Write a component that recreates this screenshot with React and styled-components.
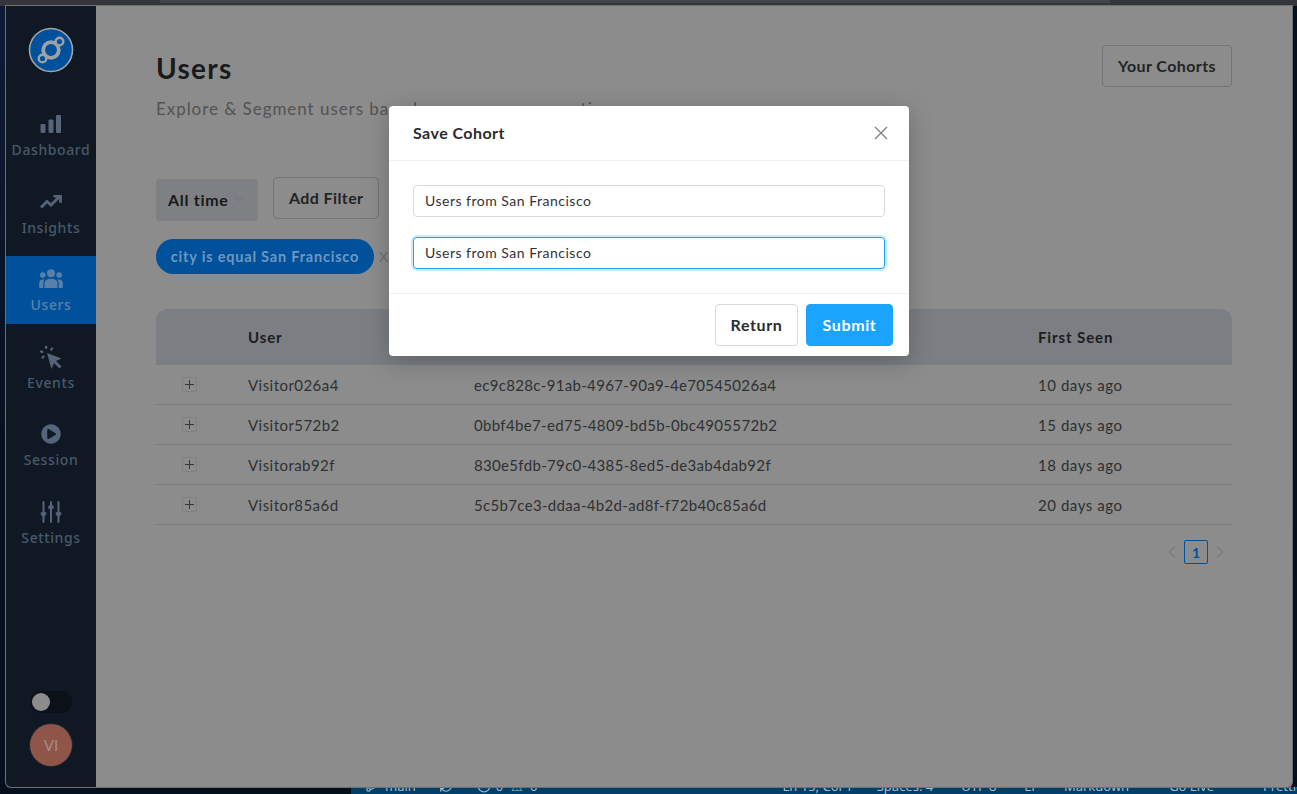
import React from 'react';
import styled, { createGlobalStyle } from 'styled-components';
import { FaPlayCircle } from 'react-icons/fa';
import { GitBranch, RefreshCw, XCircle, ChevronDown } from 'lucide-react';

const GlobalStyle = createGlobalStyle`
    html, body {
        margin: 0;
        height: 100%;
        background: #060f1e;
        font-family: "Lato", "Open Sans", sans-serif;
    }
    * {
        box-sizing: border-box;
    }
`;

const Desktop = styled.div`
    width: 1297px;
    height: 794px;
    display: flex;
    flex-direction: column;
    overflow: hidden;
    background: linear-gradient(160deg, #101a35, #060f1e 40%, #04101c);
`;

const TopStrip = styled.div`
    height: 6px;
    flex: none;
    background: #35363b;
`;

const TopTab = styled.div`
    width: 950px;
    height: 3px;
    margin-left: 160px;
    background: #45464b;
`;

const Middle = styled.div`
    flex: 1;
    min-height: 0;
    display: flex;
    padding: 0 5px 0 6px;
`;

const Window = styled.div`
    flex: 1;
    display: flex;
    position: relative;
    background: #8c8c8c;
    border-bottom-left-radius: 5px;
    border-bottom-right-radius: 5px;
    box-shadow: 0 0 0 1px #6f7074;
    overflow: hidden;
`;

const Sidebar = styled.nav`
    width: 90px;
    flex: none;
    display: flex;
    flex-direction: column;
    align-items: stretch;
    background: #0f1823;
`;

const Logo = styled.div`
    height: 88px;
    padding-top: 21px;
    display: flex;
    justify-content: center;
`;

const NavList = styled.div`
    margin-top: 2px;
    display: flex;
    flex-direction: column;
`;

const NavItem = styled.div`
    height: 77.5px;
    padding-top: ${p => (p.$active ? '11px' : '16px')};
    display: flex;
    flex-direction: column;
    align-items: center;
    gap: 4px;
    color: ${p => (p.$active ? '#5b80a8' : '#4b586a')};
    background: ${p => (p.$active ? '#00519b' : 'transparent')};
    ${p => p.$active && 'height: 68px; margin: 5px 0 4.5px;'}
`;

const NavIcon = styled.div`
    height: 24px;
    display: flex;
    align-items: center;
    justify-content: center;
`;

const NavLabel = styled.span`
    font-family: "Noto Sans", sans-serif;
    font-size: 14px;
    font-weight: 500;
    line-height: 20px;
    letter-spacing: 0.6px;
`;

const SideBottom = styled.div`
    margin-top: auto;
    padding: 0 0 21px 24px;
    display: flex;
    flex-direction: column;
    gap: 11px;
`;

const Toggle = styled.div`
    width: 42px;
    height: 22px;
    padding: 2px;
    border-radius: 11px;
    background: #0a1118;
`;

const Knob = styled.div`
    width: 18px;
    height: 18px;
    border-radius: 50%;
    background: #8c8c8c;
`;

const Avatar = styled.div`
    width: 42px;
    height: 42px;
    border-radius: 50%;
    display: flex;
    align-items: center;
    justify-content: center;
    background: #8f5548;
    box-shadow: 0 0 0 1px #1c2638;
    color: #a88c86;
    font-size: 15px;
`;

const Main = styled.main`
    flex: 1;
    padding: 39px 60px 0;
    display: flex;
    flex-direction: column;
`;

const HeadRow = styled.div`
    display: flex;
    justify-content: space-between;
    align-items: flex-start;
`;

const Title = styled.h1`
    margin: 0;
    font-size: 28px;
    line-height: 46px;
    font-weight: 700;
    color: #181a1c;
    letter-spacing: 1.3px;
`;

const Subtitle = styled.p`
    margin: 6px 0 0;
    font-size: 17px;
    line-height: 24px;
    color: #525354;
    letter-spacing: 0.95px;
`;

const OutlineButton = styled.button`
    height: 42px;
    padding: 0 15px 2px;
    border: 1px solid #747474;
    border-radius: 4px;
    background: transparent;
    font: 700 16px "Lato", sans-serif;
    letter-spacing: 0.4px;
    color: #232425;
`;

const CohortsButton = styled(OutlineButton)`
    width: 130px;
    padding: 0 0 2px;
`;

const FilterRow = styled.div`
    margin-top: 56px;
    display: flex;
    align-items: flex-start;
    gap: 15px;
`;

const SelectBox = styled.div`
    width: 102px;
    height: 42px;
    margin-top: 2px;
    padding: 0 12px 2px;
    display: flex;
    align-items: center;
    justify-content: space-between;
    border-radius: 4px;
    background: #7e8083;
    font-size: 16px;
    font-weight: 700;
    letter-spacing: 0.7px;
    color: #16181a;
`;

const PillRow = styled.div`
    margin-top: 18px;
    display: flex;
    align-items: center;
    gap: 5px;
`;

const Pill = styled.div`
    width: 218px;
    height: 35px;
    display: flex;
    align-items: center;
    justify-content: center;
    border-radius: 18px;
    background: #00519b;
    color: #6f97bf;
    font-size: 14.5px;
    font-weight: 700;
    letter-spacing: 0.8px;
`;

const PillClose = styled.span`
    color: #6d6d6d;
    font-size: 14px;
`;

const Table = styled.div`
    margin-top: 35px;
`;

const Row = styled.div`
    display: grid;
    grid-template-columns: 92px 226px 564px 1fr;
    align-items: center;
    height: 40px;
    border-bottom: 1px solid #7c7c7c;
    font-size: 15px;
    color: #2f3032;
    letter-spacing: 0.45px;
`;

const HeaderRow = styled(Row)`
    height: 56px;
    border: 0;
    border-radius: 12px 12px 0 0;
    background: #7b7e82;
    font-weight: 700;
    letter-spacing: 0.9px;
    color: #1b1d1f;
`;

const IdCell = styled.span`
    letter-spacing: 0.33px;
`;

const SeenCell = styled.span`
    letter-spacing: 0.55px;
`;

const Expand = styled.div`
    width: 15px;
    height: 15px;
    margin-left: 26px;
    display: flex;
    align-items: center;
    justify-content: center;
    border: 1px solid #808080;
    border-radius: 2px;
`;

const Pagination = styled.div`
    margin-top: 15px;
    display: flex;
    justify-content: flex-end;
    align-items: center;
    gap: 7px;
    padding-right: 7px;
`;

const PageBox = styled.div`
    width: 24px;
    height: 24px;
    display: flex;
    align-items: center;
    justify-content: center;
    border: 1px solid #00519b;
    border-radius: 2px;
    color: #00519b;
    font-size: 14px;
    font-weight: 700;
`;

const Modal = styled.div`
    position: absolute;
    left: 383px;
    top: 100px;
    width: 520px;
    height: 250px;
    display: flex;
    flex-direction: column;
    border-radius: 4px;
    background: #fff;
    box-shadow: 0 6px 24px rgba(0, 0, 0, 0.22);
`;

const ModalHead = styled.div`
    height: 55px;
    padding: 0 21px 2px 24px;
    display: flex;
    align-items: center;
    justify-content: space-between;
    border-bottom: 1px solid #f0f0f0;
    font-size: 16px;
    font-weight: 700;
    color: #2c2c2c;
    letter-spacing: 0.45px;
`;

const CloseIcon = styled.svg`
    margin-top: 2px;
`;

const ModalBody = styled.div`
    height: 133px;
    padding: 24px;
    display: flex;
    flex-direction: column;
    gap: 20px;
    border-bottom: 1px solid #f0f0f0;
`;

const Input = styled.input`
    width: 100%;
    height: 32px;
    padding: 0 11px 2px;
    border: 1px solid ${p => (p.$focused ? '#1aa3ff' : '#d9d9d9')};
    border-radius: 4px;
    outline: 0;
    box-shadow: ${p => (p.$focused ? '0 0 0 2px rgba(24, 144, 255, 0.2)' : 'none')};
    font: 400 14px "Lato", sans-serif;
    color: #333;
    letter-spacing: 0.5px;
`;

const ModalFoot = styled.div`
    flex: 1;
    padding: 10px 16px;
    display: flex;
    justify-content: flex-end;
    gap: 8px;
`;

const ModalButton = styled.button`
    height: 42px;
    width: ${p => p.$width}px;
    padding: 0 0 2px;
    border: 1px solid ${p => (p.$primary ? '#1aa3ff' : '#d9d9d9')};
    border-radius: 4px;
    background: ${p => (p.$primary ? '#1aa3ff' : '#fff')};
    color: ${p => (p.$primary ? '#fff' : '#2c2c2c')};
    font: 700 16px "Lato", sans-serif;
    letter-spacing: 0.6px;
`;

const BottomStrip = styled.div`
    height: 7px;
    flex: none;
    margin-left: 351px;
    overflow: hidden;
    background: #003f68;
`;

const StatusBar = styled.div`
    margin-top: -9px;
    height: 16px;
    display: flex;
    align-items: center;
    font-family: "Noto Sans", sans-serif;
    font-size: 13px;
    line-height: 16px;
    color: #a8bccb;
`;

const StatusItem = styled.span`
    display: flex;
    align-items: center;
    margin-left: ${p => p.$left}px;
    white-space: nowrap;
    word-spacing: ${p => p.$words || 0}px;
`;

const rows = [
    ['Visitor026a4', 'ec9c828c-91ab-4967-90a9-4e70545026a4', '10 days ago'],
    ['Visitor572b2', '0bbf4be7-ed75-4809-bd5b-0bc4905572b2', '15 days ago'],
    ['Visitorab92f', '830e5fdb-79c0-4385-8ed5-de3ab4dab92f', '18 days ago'],
    ['Visitor85a6d', '5c5b7ce3-ddaa-4b2d-ad8f-f72b40c85a6d', '20 days ago'],
];

const LogoIcon = () => (
    <svg width="46" height="46" viewBox="0 0 46 46">
        <circle cx="23" cy="23" r="21.500" fill="#00519b" stroke="#a0a4a8" strokeWidth="1.600" />
        <g fill="#00519b" stroke="#9ca2a8">
            <circle cx="23" cy="23" r="7.800" strokeWidth="3.800" />
            <circle cx="31.500" cy="14.500" r="3.800" strokeWidth="2.400" />
            <circle cx="14.500" cy="31.500" r="3.800" strokeWidth="2.400" />
        </g>
    </svg>
);

const BarsIcon = () => (
    <svg width="22" height="18" viewBox="0 0 22 18" fill="#56647a">
        <rect x="0.500" y="9" width="5" height="9" rx="1" />
        <rect x="8.500" y="4.500" width="5" height="13.500" rx="1" />
        <rect x="16" y="0" width="5" height="18" rx="1" />
    </svg>
);

const TrendIcon = () => (
    <svg width="22" height="14" viewBox="0 0 22 14" fill="none" stroke="#56647a" strokeWidth="2.800">
        <path d="M1 12.500l6-6 4 3.500 8-8" />
        <path d="M13.500 1.200h7v6.500" />
    </svg>
);

const UsersIcon = () => (
    <svg width="24" height="20" viewBox="0 0 24 20" fill="#5b80a8">
        <circle cx="12" cy="4.200" r="4" />
        <circle cx="3.800" cy="6" r="2.800" />
        <circle cx="20.200" cy="6" r="2.800" />
        <path d="M5.500 19v-4.500c0-3 2.500-4.800 6.500-4.800s6.500 1.800 6.500 4.800V19z" />
        <path d="M4.200 19H1.200c-.7 0-1-.4-1-1v-3.500c0-2.500 1.500-4 4-4h1.500c-1 1.200-1.500 2.500-1.500 4z" />
        <path d="M19.800 19h3c.7 0 1-.4 1-1v-3.500c0-2.500-1.500-4-4-4h-1.500c1 1.200 1.500 2.500 1.500 4z" />
    </svg>
);

const EventsIcon = () => (
    <svg width="24" height="24" viewBox="0 0 24 24" fill="#56647a">
        <path d="M8 8l14.500 5.500-5.500 2.500 5.500 5.500-2 2-5.500-5.500-2.500 6z" />
        <g stroke="#56647a" strokeWidth="2.200" strokeLinecap="round">
            <path d="M7 1.500l.3 1.500M1.800 6.500l1.500.3M3.500 12.500l1.200-.8M13 3.500l-.8 1.200" />
        </g>
    </svg>
);

const SlidersIcon = () => (
    <svg width="22" height="22" viewBox="0 0 22 22" fill="#56647a" stroke="#56647a">
        <path d="M3.500 1v20M11 1v20M18.500 1v20" strokeWidth="2" strokeLinecap="round" />
        <path d="M1 11.500h5v2l-2.500 2.500L1 13.500zM8.500 7.500h5v-2L11 3 8.500 5.500zM16 11.500h5v2L18.500 16 16 13.500z" strokeWidth="0.500" />
    </svg>
);

const chevrons = {
    left: 'M8 1L2 6l6 5',
    right: 'M2 1l6 5-6 5',
};

const Chevron = ({ dir, color }) => (
    <svg width="10" height="12" viewBox="0 0 10 12" fill="none" stroke={color} strokeWidth="1">
        <path d={chevrons[dir]} />
    </svg>
);

function App() {
    return (
        <Desktop>
            <GlobalStyle />
            <TopStrip><TopTab /></TopStrip>
            <Middle>
                <Window>
                    <Sidebar>
                        <Logo><LogoIcon /></Logo>
                        <NavList>
                            <NavItem><NavIcon><BarsIcon /></NavIcon><NavLabel>Dashboard</NavLabel></NavItem>
                            <NavItem><NavIcon><TrendIcon /></NavIcon><NavLabel>Insights</NavLabel></NavItem>
                            <NavItem $active><NavIcon><UsersIcon /></NavIcon><NavLabel>Users</NavLabel></NavItem>
                            <NavItem><NavIcon><EventsIcon /></NavIcon><NavLabel>Events</NavLabel></NavItem>
                            <NavItem><NavIcon><FaPlayCircle size={20} color="#56647a" /></NavIcon><NavLabel>Session</NavLabel></NavItem>
                            <NavItem><NavIcon><SlidersIcon /></NavIcon><NavLabel>Settings</NavLabel></NavItem>
                        </NavList>
                        <SideBottom>
                            <Toggle><Knob /></Toggle>
                            <Avatar>VI</Avatar>
                        </SideBottom>
                    </Sidebar>
                    <Main>
                        <HeadRow>
                            <div>
                                <Title>Users</Title>
                                <Subtitle>Explore &amp; Segment users based on common properties</Subtitle>
                            </div>
                            <CohortsButton>Your Cohorts</CohortsButton>
                        </HeadRow>
                        <FilterRow>
                            <SelectBox>All time <ChevronDown size={14} strokeWidth={1} color="#67686a" /></SelectBox>
                            <OutlineButton>Add Filter</OutlineButton>
                        </FilterRow>
                        <PillRow>
                            <Pill>city is equal San Francisco</Pill>
                            <PillClose>X</PillClose>
                        </PillRow>
                        <Table>
                            <HeaderRow>
                                <span />
                                <span>User</span>
                                <span>ID</span>
                                <span>First Seen</span>
                            </HeaderRow>
                            {rows.map(r => (
                                <Row key={r[1]}>
                                    <Expand>
                                        <svg width="9" height="9" viewBox="0 0 9 9" stroke="#333" strokeWidth="1"><path d="M4.500 0v9M0 4.500h9" /></svg>
                                    </Expand>
                                    <span>{r[0]}</span>
                                    <IdCell>{r[1]}</IdCell>
                                    <SeenCell>{r[2]}</SeenCell>
                                </Row>
                            ))}
                        </Table>
                        <Pagination>
                            <Chevron dir="left" color="#707070" />
                            <PageBox>1</PageBox>
                            <Chevron dir="right" color="#707070" />
                        </Pagination>
                    </Main>
                    <Modal>
                        <ModalHead>
                            Save Cohort
                            <CloseIcon width="14" height="14" viewBox="0 0 14 14" stroke="#7f7f7f" strokeWidth="1.300"><path d="M1 1l12 12M13 1L1 13" /></CloseIcon>
                        </ModalHead>
                        <ModalBody>
                            <Input readOnly value="Users from San Francisco" />
                            <Input readOnly $focused value="Users from San Francisco" />
                        </ModalBody>
                        <ModalFoot>
                            <ModalButton $width={83}>Return</ModalButton>
                            <ModalButton $primary $width={87}>Submit</ModalButton>
                        </ModalFoot>
                    </Modal>
                </Window>
            </Middle>
            <BottomStrip>
                <StatusBar>
                    <StatusItem $left={14}><GitBranch size={14} /></StatusItem>
                    <StatusItem $left={6}>main</StatusItem>
                    <StatusItem $left={23}><RefreshCw size={14} /></StatusItem>
                    <StatusItem $left={24}><XCircle size={14} /></StatusItem>
                    <StatusItem $left={5} $words={4}>0 ⚠ 0</StatusItem>
                    <StatusItem $left={245}>Ln 15, Col 1</StatusItem>
                    <StatusItem $left={24}>Spaces: 4</StatusItem>
                    <StatusItem $left={28}>UTF-8</StatusItem>
                    <StatusItem $left={28}>LF</StatusItem>
                    <StatusItem $left={26}>Markdown</StatusItem>
                    <StatusItem $left={40}>Go Live</StatusItem>
                    <StatusItem $left={49}>Prettier</StatusItem>
                </StatusBar>
            </BottomStrip>
        </Desktop>
    );
}

export default App;
